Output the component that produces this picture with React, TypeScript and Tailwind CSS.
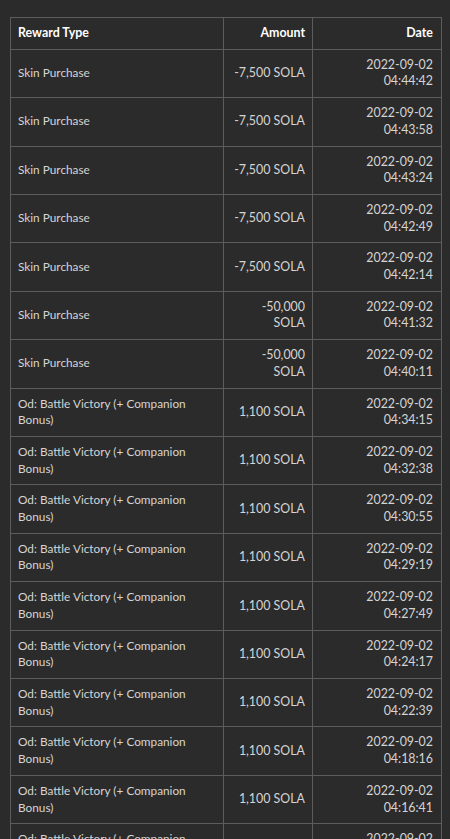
import React from 'react';

type Row = { type: string; amount: string; date: string; time: string };

const skin = (amount: string, time: string): Row => ({ type: 'Skin Purchase', amount, date: '2022-09-02', time });
const battle = (time: string): Row => ({
  type: 'Od: Battle Victory (+ Companion Bonus)',
  amount: '1,100 SOLA',
  date: '2022-09-02',
  time,
});

const ROWS: Row[] = [
  skin('-7,500 SOLA', '04:44:42'),
  skin('-7,500 SOLA', '04:43:58'),
  skin('-7,500 SOLA', '04:43:24'),
  skin('-7,500 SOLA', '04:42:49'),
  skin('-7,500 SOLA', '04:42:14'),
  skin('-50,000 SOLA', '04:41:32'),
  skin('-50,000 SOLA', '04:40:11'),
  battle('04:34:15'),
  battle('04:32:38'),
  battle('04:30:55'),
  battle('04:29:19'),
  battle('04:27:49'),
  battle('04:24:17'),
  battle('04:22:39'),
  battle('04:18:16'),
  battle('04:16:41'),
  battle('04:14:58'),
];

export default function App() {
  return (
    <div
      className="min-h-screen bg-[#2b2b2b] pt-[17px] pl-[10px] pr-[9px] text-[12.4px] text-[#d4d4d4]"
      style={{ fontFamily: 'Lato, "Open Sans", sans-serif' }}
    >
      <table className="w-[431px] table-fixed border-collapse border border-[#5c5c5c] leading-[16.7px]">
        <colgroup>
          <col className="w-[213px]" />
          <col className="w-[89px]" />
          <col className="w-[129px]" />
        </colgroup>
        <thead>
          <tr className="text-white font-bold">
            <th className="border border-[#5c5c5c] px-[7px] py-[7px] text-left">Reward Type</th>
            <th className="border border-[#5c5c5c] px-[7px] py-[7px] text-right">Amount</th>
            <th className="border border-[#5c5c5c] px-[8px] py-[7px] text-right">Date</th>
          </tr>
        </thead>
        <tbody>
          {ROWS.map((r, i) => (
            <tr key={i}>
              <td className="border border-[#5c5c5c] px-[7px] py-[7px] align-middle text-[11.8px]">{r.type}</td>
              <td className="border border-[#5c5c5c] px-[7px] py-[7px] text-right align-middle">{r.amount}</td>
              <td className="border border-[#5c5c5c] px-[8px] py-[7px] text-right align-middle">
                {r.date}
                <br />
                {r.time}
              </td>
            </tr>
          ))}
        </tbody>
      </table>
    </div>
  );
}
